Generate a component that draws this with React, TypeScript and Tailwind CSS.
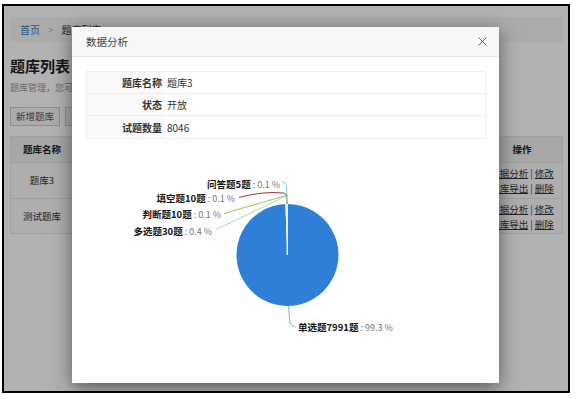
import { X } from "lucide-react";

const font = "font-['Noto_Sans_CJK_SC','Noto_Sans',sans-serif]";

const InfoRow = ({ label, value }: { label: string; value: string }) => (
  <div className="flex h-[22px] border-b border-[#eee] last:border-b-0">
    <div className="w-[78px] bg-[#f9f9f9] pr-[3px] flex items-center justify-end text-[10px] font-bold text-[#333]">
      {label}
    </div>
    <div className="flex-1 pl-[2px] flex items-center text-[10px] text-[#333]">{value}</div>
  </div>
);

const OpLinks = () => (
  <div className="flex flex-col items-center gap-[1px] text-[9.5px] leading-[14px] text-[#333]">
    <div>
      <span className="underline">数据分析</span>
      <span className="text-[#b0b] mx-[2px]">|</span>
      <span className="underline">修改</span>
    </div>
    <div>
      <span className="underline">题库导出</span>
      <span className="text-[#b0b] mx-[2px]">|</span>
      <span className="underline">删除</span>
    </div>
  </div>
);

const Label = ({ x, y, name, pct, anchor }: { x: number; y: number; name: string; pct: string; anchor: "start" | "end" }) => (
  <text x={x} y={y} textAnchor={anchor} fontSize={9.5}>
    <tspan fontWeight="bold" fill="#111">{name}</tspan>
    <tspan fill="#777" fontSize={9}>{`\u00a0:\u00a0${pct}\u00a0%`}</tspan>
  </text>
);

const PieChart = () => {
  const cx = 287.5;
  const cy = 254;
  const r = 51;
  // main slice from 12 o'clock clockwise to 357.5deg
  const end = (357.5 * Math.PI) / 180;
  const ex = cx + r * Math.sin(end);
  const ey = cy - r * Math.cos(end);
  return (
    <svg
      width={427}
      height={245}
      viewBox="72 138 427 245"
      style={{ fontFamily: "'Noto Sans CJK SC', 'Noto Sans', sans-serif" }}
    >
      <path d={`M${cx} ${cy} L${cx} ${cy - r} A${r} ${r} 0 1 1 ${ex} ${ey} Z`} fill="#2f7ed8" />
      <path d={`M${cx} ${cy} L${ex} ${ey} L${cx} ${cy - r} Z`} fill="#d7ecf5" />
      <line x1={cx - 0.3} y1={cy} x2={cx - 0.3} y2={cy - r} stroke="#eef6fa" strokeWidth={1.4} />

      {/* connectors */}
      <path d="M282 181 Q286.5 181 286.6 187 L287 203" fill="none" stroke="#7cc8e6" strokeWidth={1} />
      <path d="M239 196.5 Q262 190 284 192 L286.6 194 L287 203" fill="none" stroke="#a33" strokeWidth={1} />
      <path d="M224 212.5 L286 194.5 L287 203" fill="none" stroke="#a8c53a" strokeWidth={1} />
      <path d="M216 228.5 L286 195 L287 203" fill="none" stroke="#94dfc2" strokeWidth={1} />
      <path d="M288.6 305 L289.6 320 Q290.5 325.5 295.5 326" fill="none" stroke="#7fb0e8" strokeWidth={1} />

      {/* labels */}
      <Label x={280} y={186.5} anchor="end" name="问答题5题" pct="0.1" />
      <Label x={235} y={200.5} anchor="end" name="填空题10题" pct="0.1" />
      <Label x={221} y={216.5} anchor="end" name="判断题10题" pct="0.1" />
      <Label x={212} y={233.5} anchor="end" name="多选题30题" pct="0.4" />
      <Label x={298} y={329.5} anchor="start" name="单选题7991题" pct="99.3" />
    </svg>
  );
};

export default function App() {
  return (
    <div className={`w-[577px] h-[399px] bg-white pt-[4px] pl-[2px] ${font}`}>
      <div className="relative w-[568px] h-[389px] border-2 border-black overflow-hidden bg-white">
        {/* page behind the dialog */}
        <div className="pt-[11px] pl-[6px] pr-[5px]">
          <div className="h-[25px] bg-[#f5f5f5] flex items-center pl-[10px] text-[10px]">
            <span className="text-[#337ab7]">首页</span>
            <span className="text-[#bbb] mx-[8px]">&gt;</span>
            <span className="text-[#333]">题库列表</span>
          </div>
          <h1 className="mt-[13px] text-[15px] leading-[22px] font-bold text-[#222]">题库列表</h1>
          <p className="mt-[5px] text-[9px] leading-[12px] text-[#999]">题库管理，您可以管理</p>
          <div className="mt-[13px] flex gap-[5px]">
            <button className="h-[19px] w-[50px] border border-[#ccc] bg-[#f5f5f5] text-[9.5px] text-[#555]">
              新增题库
            </button>
            <button className="h-[19px] w-[50px] border border-[#ccc] bg-[#f5f5f5] text-[9.5px] text-[#555]">
              导入题库
            </button>
          </div>
          <div className="mt-[10px] border border-[#e5e5e5]">
            <div className="flex h-[25px] bg-[#efefef] text-[9.5px] font-bold text-[#222]">
              <div className="w-[62px] flex items-center justify-center">题库名称</div>
              <div className="flex-1" />
              <div className="w-[80px] flex items-center justify-center">操作</div>
            </div>
            <div className="flex h-[36px] border-t border-[#e5e5e5] bg-[#fafafa] text-[9.5px] text-[#333]">
              <div className="w-[62px] flex items-center justify-center">题库3</div>
              <div className="flex-1" />
              <div className="w-[80px] flex items-center justify-center">
                <OpLinks />
              </div>
            </div>
            <div className="flex h-[35px] border-t border-[#e5e5e5] bg-[#fafafa] text-[9.5px] text-[#333]">
              <div className="w-[62px] flex items-center justify-center">测试题库</div>
              <div className="flex-1" />
              <div className="w-[80px] flex items-center justify-center">
                <OpLinks />
              </div>
            </div>
          </div>
        </div>

        {/* backdrop */}
        <div className="absolute inset-0 bg-black/30" />

        {/* dialog */}
        <div className="absolute left-[68px] top-[21px] w-[427px] h-[356px] bg-white shadow-[0_5px_18px_rgba(0,0,0,0.5)]">
          <div className="h-[30px] bg-[#f7f7f7] border-b border-[#e8e8e8] flex items-center justify-between pl-[14px] pr-[9px]">
            <span className="text-[10.5px] text-[#444]">数据分析</span>
            <X size={15} strokeWidth={1.4} className="text-[#555]" />
          </div>
          <div className="pt-[14px] pl-[14px] pr-[13px]">
            <div className="border border-[#eee]">
              <InfoRow label="题库名称" value="题库3" />
              <InfoRow label="状态" value="开放" />
              <InfoRow label="试题数量" value="8046" />
            </div>
          </div>
          <PieChart />
        </div>
      </div>
    </div>
  );
}
